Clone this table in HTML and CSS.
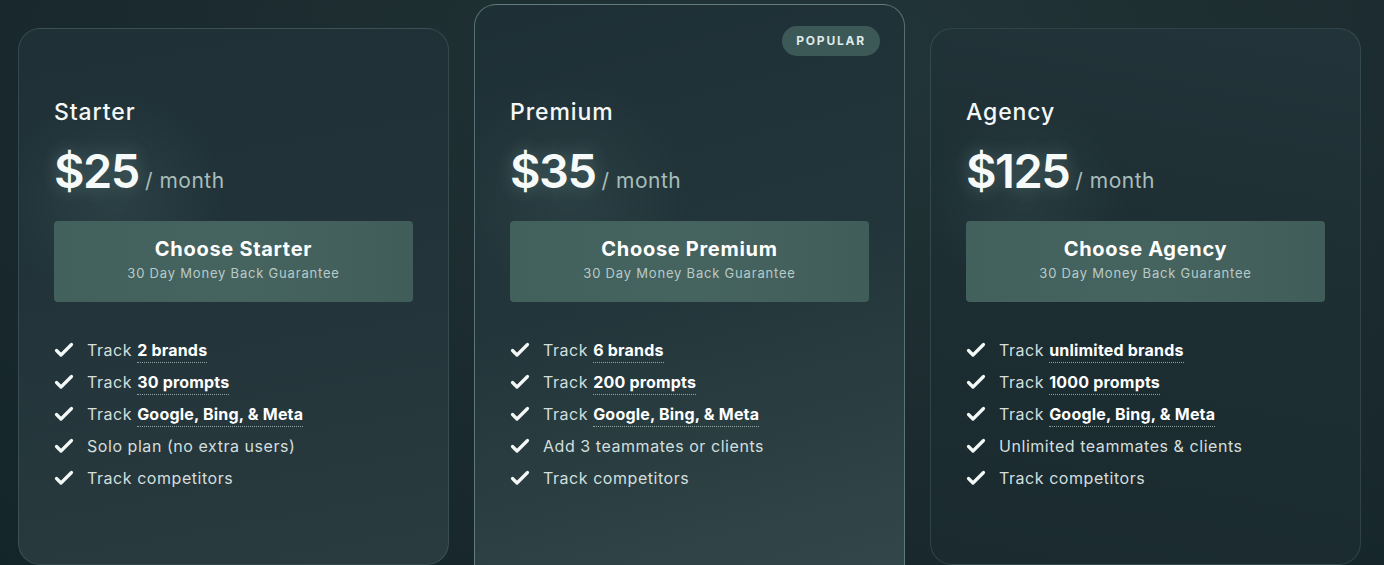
FILE: index.html
```html
<!DOCTYPE html>
<html lang="en">
<head>
<meta charset="utf-8">
<title>Pricing</title>
<link rel="stylesheet" href="styles.css">
</head>
<body>
<main class="pricing">
  <section class="card card-side card-left">
    <h2 class="plan">Starter</h2>
    <div class="price"><span class="amount">$25</span><span class="per">/ month</span></div>
    <a class="cta" href="#"><span class="cta-title">Choose Starter</span><span class="cta-sub">30 Day Money Back Guarantee</span></a>
    <ul class="features">
      <li><svg class="check" viewBox="0 0 20 16"><path d="M2.5 8.5l4.5 4.5L17.5 2.5"/></svg><span>Track <b>2 brands</b></span></li>
      <li><svg class="check" viewBox="0 0 20 16"><path d="M2.5 8.5l4.5 4.5L17.5 2.5"/></svg><span>Track <b>30 prompts</b></span></li>
      <li><svg class="check" viewBox="0 0 20 16"><path d="M2.5 8.5l4.5 4.5L17.5 2.5"/></svg><span>Track <b>Google, Bing, &amp; Meta</b></span></li>
      <li><svg class="check" viewBox="0 0 20 16"><path d="M2.5 8.5l4.5 4.5L17.5 2.5"/></svg><span>Solo plan (no extra users)</span></li>
      <li><svg class="check" viewBox="0 0 20 16"><path d="M2.5 8.5l4.5 4.5L17.5 2.5"/></svg><span>Track competitors</span></li>
    </ul>
  </section>
  <section class="card card-popular">
    <span class="badge">POPULAR</span>
    <h2 class="plan">Premium</h2>
    <div class="price"><span class="amount">$35</span><span class="per">/ month</span></div>
    <a class="cta" href="#"><span class="cta-title">Choose Premium</span><span class="cta-sub">30 Day Money Back Guarantee</span></a>
    <ul class="features">
      <li><svg class="check" viewBox="0 0 20 16"><path d="M2.5 8.5l4.5 4.5L17.5 2.5"/></svg><span>Track <b>6 brands</b></span></li>
      <li><svg class="check" viewBox="0 0 20 16"><path d="M2.5 8.5l4.5 4.5L17.5 2.5"/></svg><span>Track <b>200 prompts</b></span></li>
      <li><svg class="check" viewBox="0 0 20 16"><path d="M2.5 8.5l4.5 4.5L17.5 2.5"/></svg><span>Track <b>Google, Bing, &amp; Meta</b></span></li>
      <li><svg class="check" viewBox="0 0 20 16"><path d="M2.5 8.5l4.5 4.5L17.5 2.5"/></svg><span>Add 3 teammates or clients</span></li>
      <li><svg class="check" viewBox="0 0 20 16"><path d="M2.5 8.5l4.5 4.5L17.5 2.5"/></svg><span>Track competitors</span></li>
    </ul>
  </section>
  <section class="card card-side card-right">
    <h2 class="plan">Agency</h2>
    <div class="price"><span class="amount">$125</span><span class="per">/ month</span></div>
    <a class="cta" href="#"><span class="cta-title">Choose Agency</span><span class="cta-sub">30 Day Money Back Guarantee</span></a>
    <ul class="features">
      <li><svg class="check" viewBox="0 0 20 16"><path d="M2.5 8.5l4.5 4.5L17.5 2.5"/></svg><span>Track <b>unlimited brands</b></span></li>
      <li><svg class="check" viewBox="0 0 20 16"><path d="M2.5 8.5l4.5 4.5L17.5 2.5"/></svg><span>Track <b>1000 prompts</b></span></li>
      <li><svg class="check" viewBox="0 0 20 16"><path d="M2.5 8.5l4.5 4.5L17.5 2.5"/></svg><span>Track <b>Google, Bing, &amp; Meta</b></span></li>
      <li><svg class="check" viewBox="0 0 20 16"><path d="M2.5 8.5l4.5 4.5L17.5 2.5"/></svg><span>Unlimited teammates &amp; clients</span></li>
      <li><svg class="check" viewBox="0 0 20 16"><path d="M2.5 8.5l4.5 4.5L17.5 2.5"/></svg><span>Track competitors</span></li>
    </ul>
  </section>
</main>
</body>
</html>
```
FILE: styles.css
```css
html, body {
  margin: 0;
  padding: 0;
  height: 100%;
  overflow: hidden;
}
body {
  background: radial-gradient(ellipse at 60% 10%, #223538 0%, #1b2a2e 55%, #14252a 100%);
  font-family: Inter, "Noto Sans", sans-serif;
  color: #f2f7f6;
}
.pricing {
  display: grid;
  grid-template-columns: repeat(3, 431px);
  column-gap: 25px;
  align-items: start;
  padding: 28px 0 0 18px;
}
.card {
  position: relative;
  box-sizing: border-box;
  height: 537px;
  padding: 69px 35px 0 35px;
  border-radius: 22px;
  border: 1px solid rgba(160, 200, 195, 0.16);
  display: flex;
  flex-direction: column;
}
.card-left {
  background:
    radial-gradient(circle at 22% 32%, rgba(70, 100, 100, 0.28) 0%, rgba(70, 100, 100, 0) 22%),
    linear-gradient(170deg, #1f3137 0%, #213339 40%, #2a3b3f 100%);
}
.card-right {
  background:
    radial-gradient(circle at 22% 32%, rgba(70, 100, 100, 0.22) 0%, rgba(70, 100, 100, 0) 20%),
    linear-gradient(190deg, #223439 0%, #1d2e33 50%, #1a2a2f 100%);
}
.card-popular {
  margin-top: -24px;
  height: 600px;
  padding-top: 93px;
  border-color: rgba(180, 215, 210, 0.38);
  background:
    radial-gradient(circle at 22% 32%, rgba(70, 100, 100, 0.25) 0%, rgba(70, 100, 100, 0) 22%),
    linear-gradient(165deg, #1e3035 0%, #22353a 45%, #34494b 100%);
}
.badge {
  position: absolute;
  top: 21px;
  right: 24px;
  height: 30px;
  padding: 0 14px;
  border-radius: 15px;
  background: #3c5957;
  color: #dfe9e8;
  font-size: 12px;
  font-weight: 700;
  letter-spacing: 1.8px;
  line-height: 30px;
}
.plan {
  margin: 0;
  font-size: 23px;
  font-weight: 500;
  line-height: 28px;
  color: #f4f8f7;
  letter-spacing: 0.9px;
}
.price {
  margin-top: 16px;
  display: flex;
  align-items: baseline;
  height: 60px;
}
.amount {
  font-size: 47px;
  font-weight: 600;
  letter-spacing: -1.5px;
  color: #f6fbfa;
  text-shadow: 0 0 18px rgba(200, 240, 235, 0.25);
}
.per {
  margin-left: 6px;
  font-size: 21px;
  letter-spacing: 0.5px;
  color: #a8bdbb;
}
.cta {
  margin-top: 19px;
  box-sizing: border-box;
  height: 81px;
  padding-bottom: 6px;
  border-radius: 4px;
  background: linear-gradient(90deg, #42605c 0%, #46645f 50%, #415d5a 100%);
  display: flex;
  flex-direction: column;
  align-items: center;
  justify-content: center;
  text-decoration: none;
  color: #ffffff;
}
.cta-title {
  font-size: 20px;
  font-weight: 700;
  line-height: 24px;
  letter-spacing: 0.7px;
}
.cta-sub {
  margin-top: 4px;
  font-size: 13px;
  line-height: 16px;
  letter-spacing: 0.8px;
  color: #b9cac8;
}
.features {
  list-style: none;
  margin: 37px 0 0 0;
  padding: 0;
  display: flex;
  flex-direction: column;
  gap: 10px;
}
.features li {
  display: flex;
  align-items: center;
  height: 22px;
  font-size: 16px;
  letter-spacing: 0.55px;
  color: #d3dfdd;
}
.check {
  width: 20px;
  height: 16px;
  margin-right: 13px;
  fill: none;
  stroke: #f4f8f7;
  stroke-width: 3.2;
  stroke-linecap: round;
  stroke-linejoin: round;
}
.features b {
  font-weight: 700;
  letter-spacing: 0.2px;
  color: #ffffff;
  padding-bottom: 2px;
  border-bottom: 1px dotted rgba(220, 235, 232, 0.6);
}
```
